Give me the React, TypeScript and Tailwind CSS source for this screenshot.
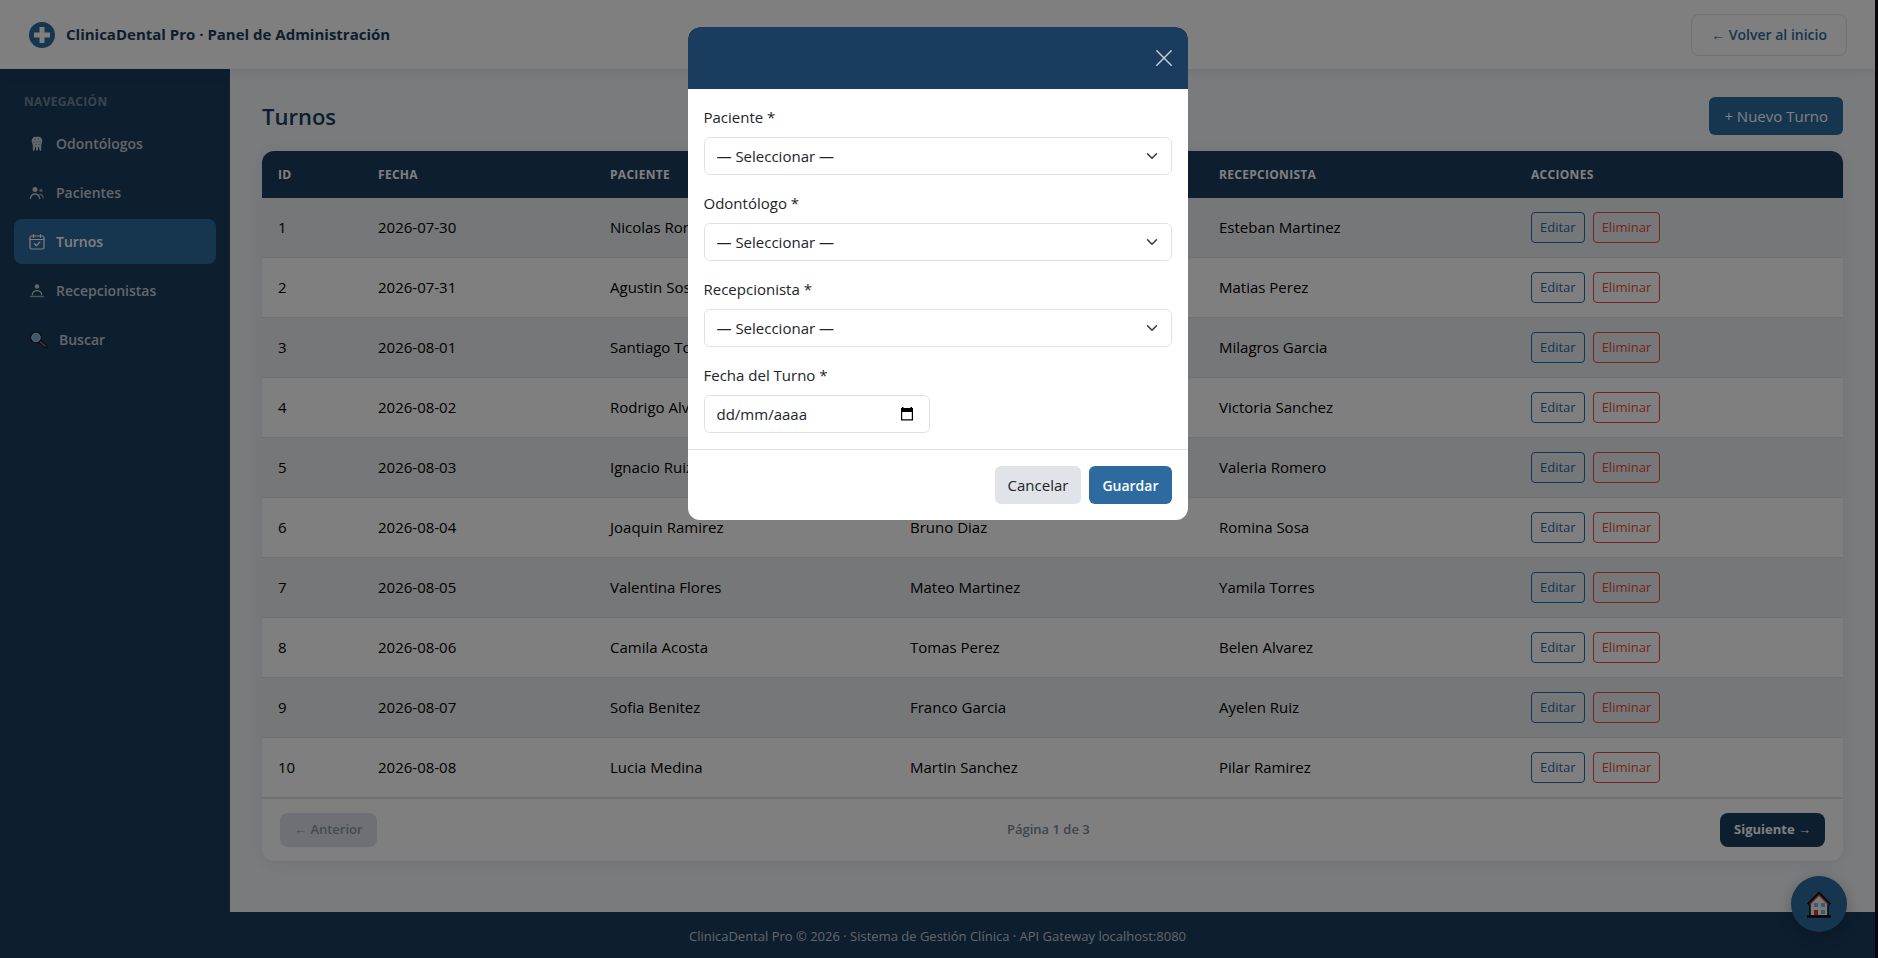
import React from "react";

const font = "font-['Open_Sans','Noto_Sans',sans-serif]";

const rows = [
  [1, "2026-07-30", "Nicolas Romero", "Lautaro Gomez", "Esteban Martinez"],
  [2, "2026-07-31", "Agustin Sosa", "Emiliano Lopez", "Matias Perez"],
  [3, "2026-08-01", "Santiago Torres", "Facundo Ruiz", "Milagros Garcia"],
  [4, "2026-08-02", "Rodrigo Alvarez", "Julian Castro", "Victoria Sanchez"],
  [5, "2026-08-03", "Ignacio Ruiz", "Gonzalo Silva", "Valeria Romero"],
  [6, "2026-08-04", "Joaquin Ramirez", "Bruno Diaz", "Romina Sosa"],
  [7, "2026-08-05", "Valentina Flores", "Mateo Martinez", "Yamila Torres"],
  [8, "2026-08-06", "Camila Acosta", "Tomas Perez", "Belen Alvarez"],
  [9, "2026-08-07", "Sofia Benitez", "Franco Garcia", "Ayelen Ruiz"],
  [10, "2026-08-08", "Lucia Medina", "Martin Sanchez", "Pilar Ramirez"],
];

const headers = ["ID", "Fecha", "Paciente", "Odontólogo", "Recepcionista", "Acciones"];

function ToothIcon() {
  return (
    <svg width="16" height="16" viewBox="0 0 16 16" aria-hidden="true">
      <path
        d="M2.700 5c0-2.600 1.700-4.200 3.600-4.200.7 0 1.200.2 1.700.2s1-.2 1.700-.2c1.900 0 3.600 1.600 3.600 4.200 0 1.500-.8 2.700-1 4.200-.1 2 .2 5.800-.9 5.800s-1.200-2.500-1.500-4h-.7c-.1 1.600-.2 4-1.200 4s-1.100-2.400-1.200-4h-.7c-.2 1.500-.3 4-1.400 4s-.8-3.800-.9-5.800C3.600 7.700 2.700 6.500 2.700 5z"
        fill="currentColor"
      />
      <path d="M6 3.500h.01M9.500 3h.01M8 5.500h.01M5 6.500h.01M11 6h.01M7 8.500h.01M10 8.500h.01" stroke="#1a3c5e" strokeWidth="1" strokeLinecap="round" opacity="0.7" />
    </svg>
  );
}

function PeopleIcon() {
  return (
    <svg width="16" height="16" viewBox="0 0 16 16" fill="none" stroke="currentColor" strokeLinecap="round" aria-hidden="true">
      <circle cx="6" cy="4.500" r="2.500" fill="currentColor" stroke="none" />
      <circle cx="12" cy="5.500" r="1.800" fill="currentColor" stroke="none" opacity="0.6" />
      <path d="M1.500 13.500c.4-3 2-4.500 4.500-4.500s4.300 1.500 4.700 4.500" strokeWidth="1.300" />
      <path d="M11 9.300c1.800.2 2.900 1.500 3.200 3.700" strokeWidth="1.200" opacity="0.7" />
    </svg>
  );
}

function CalendarIcon() {
  return (
    <svg width="16" height="16" viewBox="0 0 16 16" fill="none" stroke="currentColor" strokeLinecap="round" strokeLinejoin="round" aria-hidden="true">
      <rect x="1" y="2" width="14" height="13" rx="1.500" strokeWidth="1.200" />
      <path d="M1 5.500h14M4.500.7v2.600M11.500.7v2.600" strokeWidth="1.200" />
      <path d="M5.500 9.800l2 1.900 3.200-3.600" strokeWidth="1.300" />
    </svg>
  );
}

function DeskIcon() {
  return (
    <svg width="16" height="16" viewBox="0 0 16 16" fill="none" stroke="currentColor" strokeLinecap="round" aria-hidden="true">
      <circle cx="8" cy="3.500" r="2.300" fill="currentColor" stroke="none" />
      <path d="M3.300 11.500c.6-2.600 2.200-3.800 4.700-3.800s4.100 1.200 4.700 3.800" strokeWidth="1.300" />
      <path d="M1.500 13.500h13" strokeWidth="1.500" opacity="0.7" />
    </svg>
  );
}

function SearchIcon() {
  return (
    <svg width="19" height="18" viewBox="0 0 19 18" aria-hidden="true">
      <path d="M10.500 10l6 5.500" stroke="#2a1a1e" strokeWidth="4" strokeLinecap="round" />
      <path d="M11.500 11l4.500 4" stroke="#8a7678" strokeWidth="1.500" strokeLinecap="round" />
      <circle cx="7" cy="6.500" r="5.300" fill="#6fb4e4" stroke="#2a1a1e" strokeWidth="1.500" />
      <circle cx="7" cy="6.500" r="4.200" fill="none" stroke="#b9cfdf" strokeWidth="1" />
    </svg>
  );
}

const nav = [
  { label: "Odontólogos", icon: <ToothIcon /> },
  { label: "Pacientes", icon: <PeopleIcon /> },
  { label: "Turnos", icon: <CalendarIcon />, active: true },
  { label: "Recepcionistas", icon: <DeskIcon /> },
  { label: "Buscar", icon: <SearchIcon /> },
];

function Header() {
  return (
    <header className="relative z-10 flex h-[69px] items-center justify-between bg-white px-7 shadow-[0_2px_12px_rgba(26,60,94,0.1)]">
      <div className="flex items-center gap-[10px]">
        <svg width="28" height="28" viewBox="0 0 28 28" aria-hidden="true">
          <circle cx="14" cy="14" r="13" fill="#2d6a9f" />
          <path d="M11.500 6h5v5.500H22v5h-5.500V22h-5v-5.500H6v-5h5.500z" fill="#fff" />
        </svg>
        <span className="text-[15px] font-bold text-[#1a3c5e]">ClinicaDental Pro · Panel de Administración</span>
      </div>
      <a href="#inicio" className="flex h-[42px] items-center rounded-lg border border-[#dee2e6] px-[19px] text-[14px] font-semibold text-[#2d6a9f]">
        ← Volver al inicio
      </a>
    </header>
  );
}

function Sidebar() {
  return (
    <aside className="w-[230px] shrink-0 bg-[#1a3c5e] px-[14px] pt-6">
      <p className="px-[10px] text-[12px] leading-[18px] font-bold tracking-wide text-white/40">NAVEGACIÓN</p>
      <nav className="mt-[10px] flex flex-col gap-1">
        {nav.map((n) => (
          <a
            key={n.label}
            href={"#" + n.label.toLowerCase()}
            className={
              n.active
                ? "flex h-[45px] items-center gap-[11px] rounded-lg bg-[#2d6a9f] px-[15px] text-[14px] font-semibold text-white"
                : "flex h-[45px] items-center gap-[11px] rounded-lg px-[15px] text-[14px] font-semibold text-white/75"
            }
          >
            {n.icon}
            {n.label}
          </a>
        ))}
      </nav>
    </aside>
  );
}

function TurnosTable() {
  return (
    <div className="mt-4 overflow-hidden rounded-xl bg-white shadow-[0_2px_16px_rgba(26,60,94,0.1)]">
      <table className="w-full table-fixed border-separate border-spacing-0 text-left text-[15px] text-black">
        <colgroup>
          <col className="w-[100px]" />
          <col className="w-[232px]" />
          <col className="w-[300px]" />
          <col className="w-[309px]" />
          <col className="w-[312px]" />
          <col className="w-[328px]" />
        </colgroup>
        <thead>
          <tr className="h-[47px] bg-[#1a3c5e] text-[12px] tracking-wide text-white uppercase">
            {headers.map((h) => (
              <th key={h} className="px-4 font-bold">{h}</th>
            ))}
          </tr>
        </thead>
        <tbody>
          {rows.map((r) => (
            <tr key={r[0]} className="h-[60px] odd:bg-[#ebeef1]">
              {r.map((c, i) => (
                <td key={i} className="border-b border-[#dee2e6] px-4">{c}</td>
              ))}
              <td className="border-b border-[#dee2e6] px-4">
                <div className="flex gap-2">
                  <button type="button" className="h-[31px] rounded border border-[#2d6a9f] px-2 text-[13px] text-[#2d6a9f]">Editar</button>
                  <button type="button" className="h-[31px] rounded border border-[#e74c3c] px-2 text-[13px] text-[#e74c3c]">Eliminar</button>
                </div>
              </td>
            </tr>
          ))}
        </tbody>
      </table>
      <div className="flex items-center justify-between border-t border-[#dde3ee] px-[18px] py-[14px] text-[13px] font-semibold">
        <button type="button" disabled className="h-[34px] rounded-lg bg-[#dde1ea] px-[14px] text-[#8a96a3]">← Anterior</button>
        <span className="text-[#7b8a9a]">Página 1 de 3</span>
        <button type="button" className="h-[34px] rounded-lg bg-[#1a3c5e] px-[14px] font-bold text-white">Siguiente →</button>
      </div>
    </div>
  );
}

function HouseIcon() {
  return (
    <svg width="26" height="28" viewBox="0 0 26 28" aria-hidden="true">
      <path d="M4 13v13h18V13L13 4z" fill="#f3f1f4" stroke="#16090c" strokeWidth="1.500" />
      <path d="M2 14.500L13 3.500l11 11" fill="none" stroke="#16090c" strokeWidth="3" />
      <path d="M3.500 14.500L13 5l9.500 9.500" fill="none" stroke="#d8452c" strokeWidth="1.300" />
      <path d="M8 13h4v4H8zM15 13h4v4h-4zM15 20h4v4h-4z" fill="#6fb4e4" />
      <path d="M8 20h4v6H8z" fill="#d13438" />
      <path d="M1 26.500h24" stroke="#16090c" strokeWidth="2.500" />
    </svg>
  );
}

function SelectField({ id, label }: { id: string; label: string }) {
  return (
    <div className="mb-4">
      <label htmlFor={id} className="mb-2 block leading-6">{label}</label>
      <div className="relative">
        <select id={id} className="block h-[38px] w-full appearance-none rounded-md border border-[#dee2e6] bg-white pr-9 pl-3">
          <option>— Seleccionar —</option>
        </select>
        <svg className="pointer-events-none absolute top-[13px] right-3 h-3 w-4" viewBox="0 0 16 16" fill="none" stroke="#343a40" strokeWidth="2" strokeLinecap="round" strokeLinejoin="round" aria-hidden="true">
          <path d="m2 5 6 6 6-6" />
        </svg>
      </div>
    </div>
  );
}

function TurnoModal() {
  return (
    <div role="dialog" aria-modal="true" aria-label="Turno" className="w-[500px] overflow-hidden rounded-xl bg-white text-[15px] text-[#212529]">
      <div className="flex h-[62px] items-center justify-end bg-[#1a3c5e] px-4">
        <button type="button" aria-label="Cerrar" className="text-white/75">
          <svg width="16" height="16" viewBox="0 0 16 16" stroke="currentColor" strokeWidth="1.500" strokeLinecap="round" aria-hidden="true">
            <path d="M.8.8l14.400 14.400M15.200.8L.8 15.200" />
          </svg>
        </button>
      </div>
      <form>
        <div className="p-4">
          <SelectField id="paciente" label="Paciente *" />
          <SelectField id="odontologo" label="Odontólogo *" />
          <SelectField id="recepcionista" label="Recepcionista *" />
          <label htmlFor="fecha" className="mb-2 block leading-6">Fecha del Turno *</label>
          <div className="relative w-[226px]">
            <input id="fecha" type="text" placeholder="dd/mm/aaaa" className="block h-[38px] w-full rounded-md border border-[#dee2e6] bg-white px-3 placeholder:text-[#212529]" />
            <svg className="pointer-events-none absolute top-3 right-4" width="14" height="14" viewBox="0 0 14 14" aria-hidden="true">
              <path d="M2 0h1.500v1h7V0H12v1h1v12.500H1V1h1zM2.200 5v7.300h9.600V5z" fill="#000" fillRule="evenodd" />
            </svg>
          </div>
        </div>
        <div className="flex justify-end gap-2 border-t border-[#dee2e6] p-4">
          <button type="button" className="h-[38px] rounded-md bg-[#e0e3e8] px-[13px]">Cancelar</button>
          <button type="button" className="h-[38px] rounded-md bg-[#2d6a9f] px-[13px] text-[14px] font-semibold text-white">Guardar</button>
        </div>
      </form>
    </div>
  );
}

export default function App() {
  return (
    <div className={`${font} bg-[#0b0409] pr-[3px]`}>
      <div className="relative flex min-h-screen flex-col bg-[#f4f7fb]">
        <Header />
        <div className="flex grow">
          <Sidebar />
          <div className="flex grow flex-col">
            <main className="grow px-8 pt-7">
              <div className="flex items-center justify-between">
                <h1 className="text-[22px] font-semibold text-[#1a3c5e]">Turnos</h1>
                <button type="button" className="h-[38px] rounded-md bg-[#2d6a9f] px-[15px] text-[15px] text-white">+ Nuevo Turno</button>
              </div>
              <TurnosTable />
            </main>
            <footer className="flex h-[46px] items-center justify-center bg-[#1a3c5e] pt-1 pr-[230px] text-[13px] text-white/75">
              ClinicaDental Pro © 2026 · Sistema de Gestión Clínica · API Gateway localhost:8080
            </footer>
          </div>
        </div>
        <button
          type="button"
          aria-label="Inicio"
          className="absolute right-7 bottom-[26px] z-20 flex h-14 w-14 items-center justify-center rounded-full bg-[#2d6a9f] shadow-[0_4px_16px_rgba(0,0,0,0.25)]"
        >
          <HouseIcon />
        </button>
        <div className="absolute inset-0 z-30 flex items-start justify-center bg-black/50 pt-[27px]">
          <TurnoModal />
        </div>
      </div>
    </div>
  );
}
